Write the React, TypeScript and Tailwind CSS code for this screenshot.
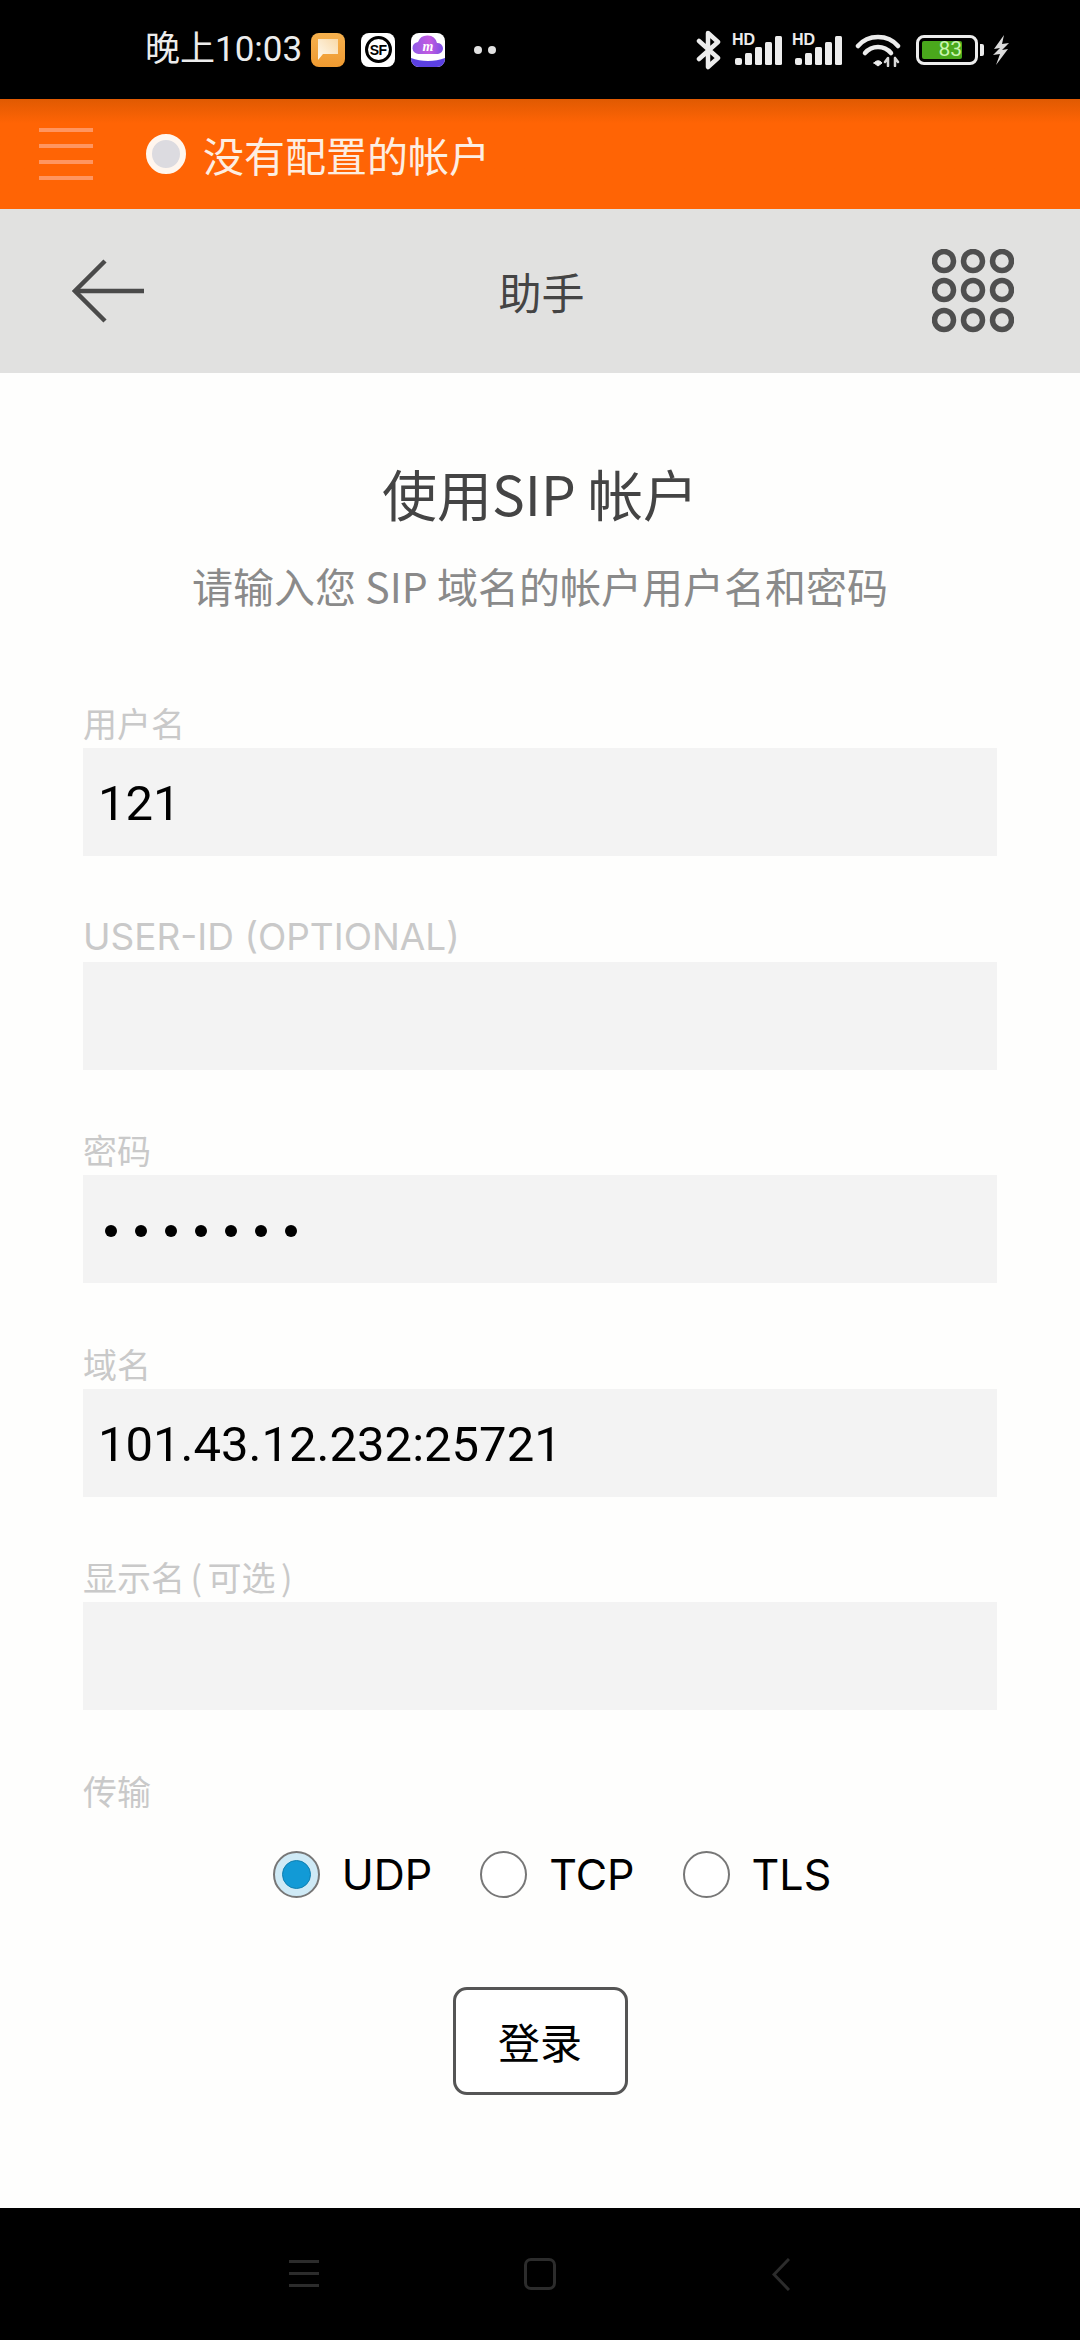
import React from "react";

const CJK = "font-['Noto_Sans_CJK_SC','Noto_Sans',sans-serif]";

function Bluetooth() {
  return (
    <svg width="26" height="40" viewBox="0 0 26 40" fill="none" stroke="#ececec" strokeWidth="4.5" strokeLinejoin="round" strokeLinecap="round">
      <path d="M3 11 L22 28 L12 37 V3 L22 12 L3 29" />
    </svg>
  );
}

function Signal() {
  return (
    <div className="relative h-[32px] w-[50px]">
      <svg width="50" height="32" viewBox="0 0 50 32">
        <rect x="3" y="24" width="7" height="7" rx="2" fill="#ececec" />
        <rect x="13" y="19" width="7" height="12" rx="1.5" fill="#ececec" />
        <rect x="23" y="13" width="7" height="18" rx="1.5" fill="#ececec" />
        <rect x="33" y="8" width="7" height="23" rx="1.5" fill="#ececec" />
        <rect x="43" y="2" width="7" height="29" rx="1.5" fill="#ececec" />
      </svg>
      <span className="absolute left-0 top-0 font-['Liberation_Sans',sans-serif] text-[16px] font-bold leading-[12px] text-[#ececec]">HD</span>
    </div>
  );
}

function Wifi() {
  return (
    <svg width="46" height="34" viewBox="0 0 46 34" fill="none" stroke="#ececec" strokeWidth="4.5" strokeLinecap="round">
      <path d="M3 13 C13 1 33 1 43 13" />
      <path d="M10 20 C17 12 29 12 36 20" />
      <path d="M19 30 L23 33 L27 30 C25 27 21 27 19 30Z" fill="#ececec" strokeWidth="1" />
      <path d="M33 33 V26 M30 29 L33 25 M40 25 V33 M40 25 L43 29" stroke="#d8d8d8" strokeWidth="2.5" />
    </svg>
  );
}

function Battery() {
  return (
    <div className="flex items-center gap-[2px]">
      <div className="flex h-[30px] w-[62px] items-center rounded-[8px] border-[3.5px] border-[#ececec] p-[3px]">
        <div className="flex h-full w-[40px] items-center justify-end rounded-[2px] bg-[#4aa81c] font-['Roboto',sans-serif] text-[21px] leading-none text-[#c8f5ae]">
          83
        </div>
      </div>
      <div className="h-[12px] w-[4px] rounded-r-[2px] bg-[#ececec]" />
    </div>
  );
}

function Bolt() {
  return (
    <svg width="18" height="32" viewBox="0 0 18 32" fill="#dcdcdc">
      <path d="M12 1 L2 15 L8 14 L1 21 L8 20 L4 31 L16 15 L10 16 L17 9 L10 10Z" />
    </svg>
  );
}

function NoteIcon() {
  return (
    <div className="flex h-[34px] w-[34px] items-center justify-center rounded-[8px] bg-linear-to-b from-[#f6b14e] to-[#ef9a30]">
      <svg width="20" height="21" viewBox="0 0 20 21">
        <defs>
          <linearGradient id="bubble" x1="0" y1="1" x2="1" y2="0">
            <stop offset="0" stopColor="#fffaf0" />
            <stop offset="1" stopColor="#f9d9a8" />
          </linearGradient>
        </defs>
        <path d="M0 0 H20 V15 H5 L0 21Z" fill="url(#bubble)" />
      </svg>
    </div>
  );
}

function SfIcon() {
  return (
    <div className="flex h-[34px] w-[34px] items-center justify-center rounded-[8px] bg-white">
      <div className="flex h-[27px] w-[27px] items-center justify-center rounded-full border-[3px] border-black font-['Liberation_Sans',sans-serif] text-[14px] font-bold leading-none tracking-[-0.5px] text-black">
        SF
      </div>
    </div>
  );
}

function CloudIcon() {
  return (
    <div className="h-[34px] w-[34px] overflow-hidden rounded-[8px] bg-white">
      <svg width="34" height="34" viewBox="0 0 34 34">
        <defs>
          <linearGradient id="cloud" x1="0" y1="0" x2="1" y2="0">
            <stop offset="0" stopColor="#8f5be8" />
            <stop offset="0.55" stopColor="#c45be0" />
            <stop offset="1" stopColor="#7a4fe6" />
          </linearGradient>
        </defs>
        <path d="M8 21 a6 6 0 0 1 -1-12 a10 10 0 0 1 19 1 a5.5 5.5 0 0 1 1 11Z" fill="url(#cloud)" />
        <path d="M0 25 C10 29 24 29 34 25 V34 H0Z" fill="#5b40e2" />
        <text x="17" y="18" textAnchor="middle" fontSize="14" fontStyle="italic" fontWeight="700" fill="#fff" fontFamily="Liberation Serif, serif">m</text>
      </svg>
    </div>
  );
}

function StatusBar() {
  return (
    <div className="flex h-[99px] items-center bg-black pl-[145px] pr-[70px]">
      <span className="font-['Roboto','Noto_Sans_CJK_SC',sans-serif] text-[35px] leading-none text-[#ececec]">晚上10:03</span>
      <div className="ml-[9px] flex items-center gap-[16px]">
        <NoteIcon />
        <SfIcon />
        <CloudIcon />
      </div>
      <div className="ml-[29px] flex gap-[6px]">
        <span className="h-[8px] w-[8px] rounded-full bg-[#e2e2e2]" />
        <span className="h-[8px] w-[8px] rounded-full bg-[#e2e2e2]" />
      </div>
      <div className="ml-auto flex items-center">
        <Bluetooth />
        <div className="ml-[10px] flex gap-[10px]">
          <Signal />
          <Signal />
        </div>
        <div className="ml-[13px]">
          <Wifi />
        </div>
        <div className="ml-[15px]">
          <Battery />
        </div>
        <div className="ml-[8px]">
          <Bolt />
        </div>
      </div>
    </div>
  );
}

function AccountBar() {
  return (
    <div className="flex h-[110px] items-center bg-[#ff6405] bg-linear-to-b from-[#e05a02] to-[#ff6405] to-[22%] pl-[39px]">
      <div className="flex w-[54px] flex-col gap-[12px]">
        <span className="h-[4px] bg-[#ff9560]" />
        <span className="h-[4px] bg-[#ff9560]" />
        <span className="h-[4px] bg-[#ff9560]" />
        <span className="h-[4px] bg-[#ff9560]" />
      </div>
      <div className="ml-[53px] h-[40px] w-[40px] rounded-full border-[6px] border-[#fff6ee] bg-[#dcdbe0]" />
      <span className={`${CJK} ml-[17px] text-[41px] leading-none text-[#fdeee2]`}>没有配置的帐户</span>
    </div>
  );
}

function TitleBar() {
  return (
    <div className="flex h-[164px] items-center justify-between bg-[#e1e1e0] pl-[72px] pr-[66px]">
      <svg width="72" height="64" viewBox="0 0 72 64" fill="none" stroke="#4a4a4a" strokeWidth="4.5">
        <path d="M72 32 H3" />
        <path d="M33 2 L3 32 L33 62" />
      </svg>
      <span className={`${CJK} ml-[7px] text-[43px] leading-none text-[#444444]`}>助手</span>
      <svg width="82" height="84" viewBox="0 0 82 84" fill="none" stroke="#4f4f4f" strokeWidth="5.5">
        {[12, 41, 71].map((y) =>
          [12, 41, 70].map((x) => <circle key={`${x}-${y}`} cx={x} cy={y} r="9.5" />),
        )}
      </svg>
    </div>
  );
}

function Field({ label, latin, children }: { label: React.ReactNode; latin?: boolean; children?: React.ReactNode }) {
  return (
    <div className="flex flex-col">
      <div className={`${latin ? "font-['Inter',sans-serif] text-[37px]" : `${CJK} text-[34px]`} h-[46px] whitespace-nowrap leading-[46px] text-[#c9c9c9]`}>
        {label}
      </div>
      <div className="mt-[2px] flex h-[108px] items-center bg-[#f3f3f3] pl-[15px] pt-[3px] font-['Roboto',sans-serif] text-[49px] leading-none text-black">
        {children}
      </div>
    </div>
  );
}

function PasswordMask({ length }: { length: number }) {
  return (
    <div className="flex gap-[18px] pl-[7px]">
      {Array.from({ length }, (_, i) => (
        <span key={i} className="h-[12px] w-[12px] rounded-full bg-black" />
      ))}
    </div>
  );
}

function Radio({ label, checked }: { label: string; checked?: boolean }) {
  return (
    <div className="flex items-center gap-[22px]">
      <div className={`flex h-[47px] w-[47px] items-center justify-center rounded-full border-2 border-[#777777] ${checked ? "bg-[#cfeaf6]" : "bg-white"}`}>
        {checked && <div className="h-[29px] w-[29px] rounded-full border border-[#0f7fb0] bg-[#129ad6]" />}
      </div>
      <span className="font-['Inter',sans-serif] text-[43px] leading-none text-black">{label}</span>
    </div>
  );
}

function NavBar() {
  return (
    <div className="flex h-[132px] items-start bg-black pl-[289px] pr-[290px] pt-[50px]">
      <div className="flex w-[30px] flex-col gap-[9px] pt-[2px]">
        <span className="h-[3px] bg-[#2c2c2c]" />
        <span className="h-[3px] bg-[#2c2c2c]" />
        <span className="h-[3px] bg-[#2c2c2c]" />
      </div>
      <div className="ml-[205px] h-[32px] w-[32px] rounded-[7px] border-[3px] border-[#2c2c2c]" />
      <svg className="ml-[216px]" width="18" height="33" viewBox="0 0 18 33" fill="none" stroke="#2c2c2c" strokeWidth="3">
        <path d="M17 1 L2 16.5 L17 32" />
      </svg>
    </div>
  );
}

export default function App() {
  return (
    <div className="flex h-[2340px] w-[1080px] flex-col overflow-hidden bg-white">
      <StatusBar />
      <AccountBar />
      <TitleBar />
      <main className="flex flex-1 flex-col bg-[#fefefd] px-[83px]">
        <h1 className={`${CJK} mt-[89px] h-[60px] text-center text-[55px] font-normal leading-[60px] text-[#444444]`}>使用SIP 帐户</h1>
        <p className={`${CJK} mt-[39px] h-[48px] whitespace-nowrap text-center text-[41px] leading-[48px] text-[#8a8a8a]`}>
          请输入您 SIP 域名的帐户用户名和密码
        </p>
        <div className="mt-[91px] flex flex-col gap-[57.6px]">
          <Field label="用户名">121</Field>
          <Field label="USER-ID (OPTIONAL)" latin />
          <Field label="密码">
            <PasswordMask length={7} />
          </Field>
          <Field label="域名">101.43.12.232:25721</Field>
          <Field
            label={
              <>
                显示名<span className="px-[5.5px]">(</span>可选<span className="px-[5.5px]">)</span>
              </>
            }
          />
        </div>
        <div className={`${CJK} mt-[58px] h-[46px] text-[34px] leading-[46px] text-[#c9c9c9]`}>传输</div>
        <div className="mt-[37px] flex justify-center gap-[48px] pl-[24px]">
          <Radio label="UDP" checked />
          <Radio label="TCP" />
          <Radio label="TLS" />
        </div>
        <button className={`${CJK} mx-auto mt-[89px] h-[108px] w-[175px] rounded-[14px] border-[3px] border-[#555555] bg-white text-[42px] leading-none text-black`}>
          登录
        </button>
      </main>
      <NavBar />
    </div>
  );
}
